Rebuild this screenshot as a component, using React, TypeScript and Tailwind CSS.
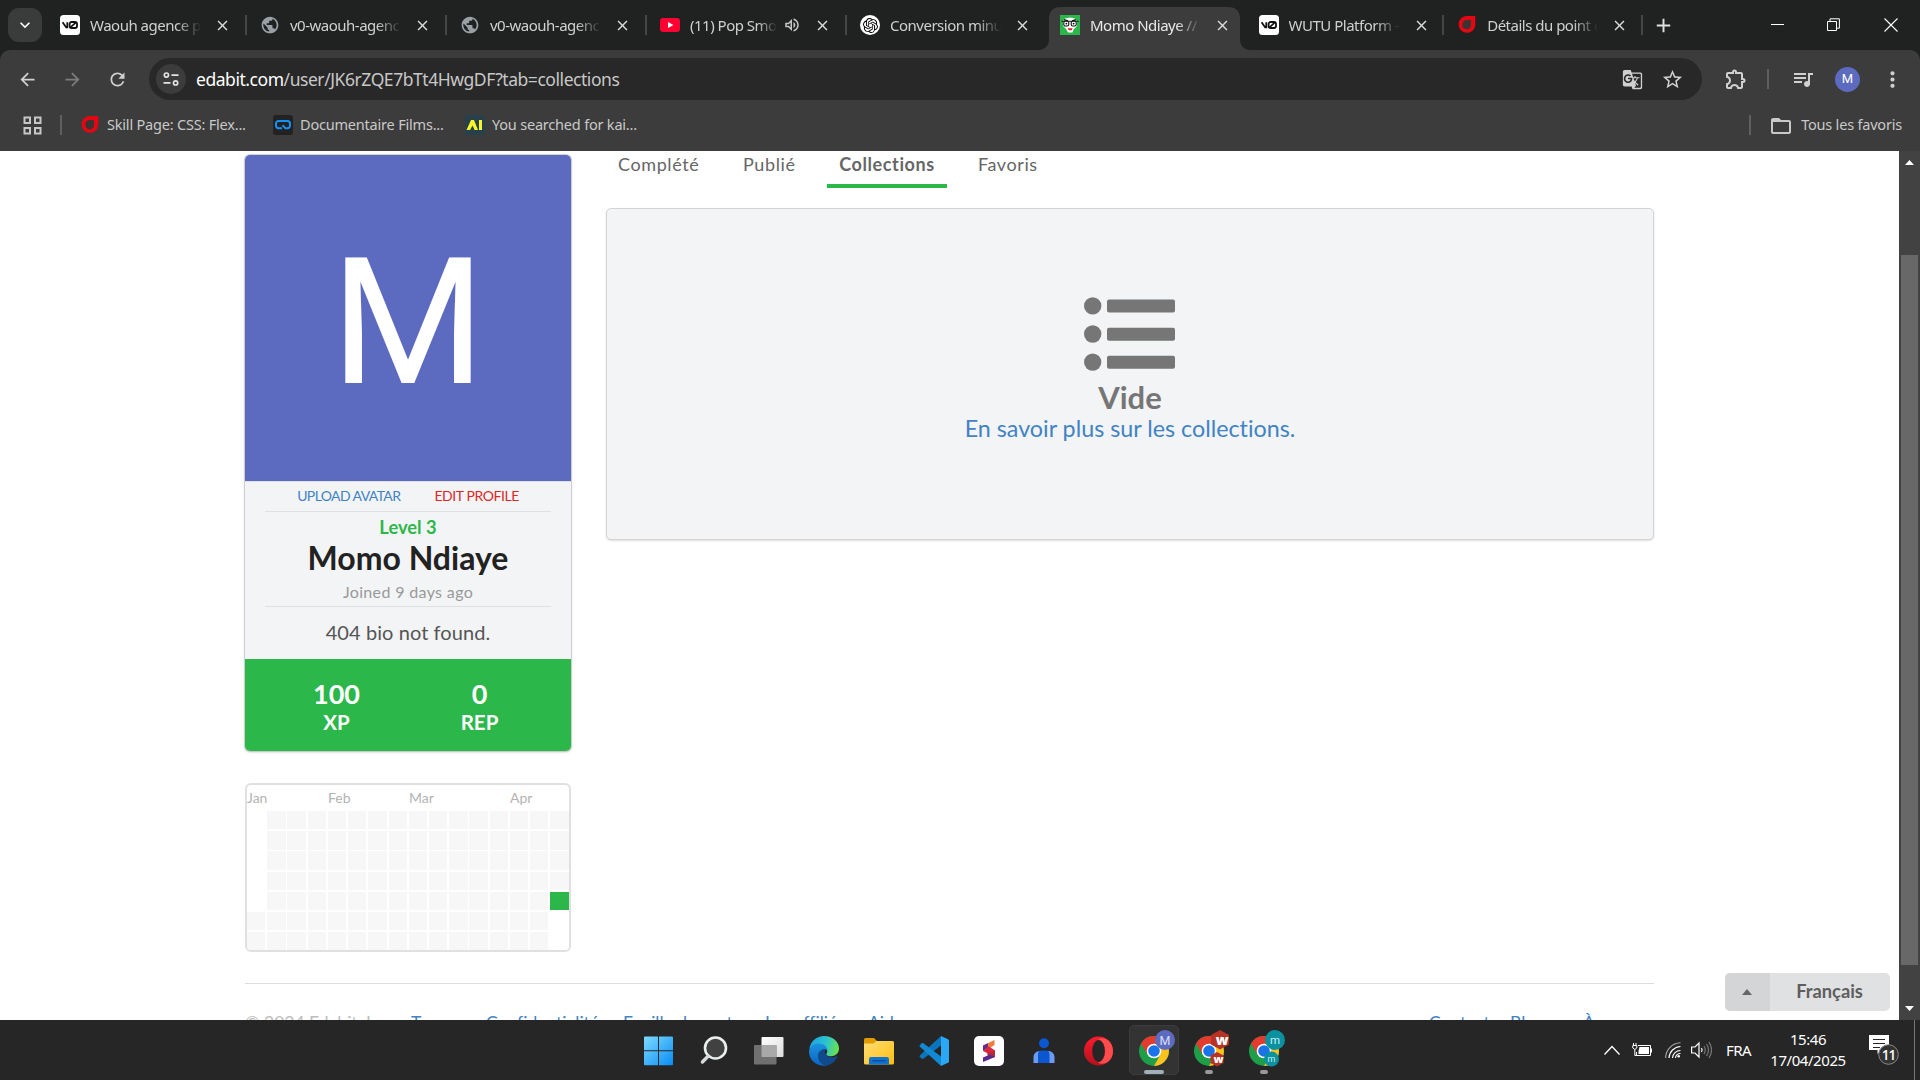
import React from "react";
import {
  MdAdd, MdArrowBack, MdArrowForward, MdClose, MdExpandMore, MdFolderOpen, MdGTranslate,
  MdMoreVert, MdOutlineExtension, MdOutlineVolumeUp, MdPublic, MdQueueMusic, MdRefresh, MdStarBorder,
} from "react-icons/md";
import { SiOpenai } from "react-icons/si";

function V0Icon() {
  return (
    <svg width="20" height="20" viewBox="0 0 20 20">
      <rect width="20" height="20" rx="3.5" fill="#fff" />
      <path d="M2.6 7.2l3.6 5.2h1.1V7.2" fill="none" stroke="#111" strokeWidth="1.8" />
      <rect x="9.6" y="7" width="7.4" height="6" rx="2" fill="none" stroke="#111" strokeWidth="1.8" />
      <path d="M10.4 12.4l5.6-5" stroke="#111" strokeWidth="1.6" />
    </svg>
  );
}

function RedDropIcon() {
  return (
    <svg width="20" height="20" viewBox="0 0 20 20">
      <path d="M10 1H18.3V10.5A8.4 8.4 0 1 1 10 1Z" fill="#e30613" />
      <path d="M10 5H14V10.5A4.3 4.6 0 1 1 10 5Z" fill="#3a3433" />
    </svg>
  );
}

function YoutubeIcon() {
  return (
    <svg width="20" height="20" viewBox="0 0 20 20">
      <rect y="3" width="20" height="14" rx="3.2" fill="#ff0033" />
      <path d="M8 7l5.400 3L8 13Z" fill="#fff" />
    </svg>
  );
}

function OpenAiIcon() {
  return (
    <span className="flex h-5 w-5 items-center justify-center rounded-full bg-white text-black">
      <SiOpenai size={15} />
    </span>
  );
}

function EdabitIcon() {
  return (
    <svg width="20" height="20" viewBox="0 0 20 20">
      <rect width="20" height="20" fill="#2cb74b" />
      <path d="M3 6L5 3.4 10 2.4 15 3.4 17 6V11L13.5 14.5 12.5 17.5H8L6.5 14.5 3 11Z" fill="#fff" />
      <path d="M1.5 6.3h17M4 4.6l4 1.2M16 4.6l-4 1.2" stroke="#111" strokeWidth="1.1" />
      <rect x="3.8" y="6.2" width="5" height="4.8" rx="1.6" fill="#fff" stroke="#111" strokeWidth="1.1" />
      <rect x="11.2" y="6.2" width="5" height="4.8" rx="1.6" fill="#fff" stroke="#111" strokeWidth="1.1" />
      <circle cx="6.4" cy="8.6" r=".9" fill="#111" />
      <circle cx="13.6" cy="8.6" r=".9" fill="#111" />
      <path d="M7.6 13.2h5l-1 2H8.8Z" fill="#d81f26" />
    </svg>
  );
}

type Tab = { icon: React.ReactNode; title: string; active?: boolean; sound?: boolean; rule: boolean };

const tabs: Tab[] = [
  { icon: <V0Icon />, title: "Waouh agence pub", rule: true },
  { icon: <MdPublic size={22} color="#9aa0a6" />, title: "v0-waouh-agence", rule: true },
  { icon: <MdPublic size={22} color="#9aa0a6" />, title: "v0-waouh-agence", rule: true },
  { icon: <YoutubeIcon />, title: "(11) Pop Smoke", sound: true, rule: true },
  { icon: <OpenAiIcon />, title: "Conversion minutes", rule: false },
  { icon: <EdabitIcon />, title: "Momo Ndiaye // Ed", active: true, rule: false },
  { icon: <V0Icon />, title: "WUTU Platform - S", rule: true },
  { icon: <RedDropIcon />, title: "Détails du point d", rule: true },
];

function TabItem({ tab, narrow }: { tab: Tab; narrow: boolean }) {
  return (
    <div className={"relative h-[50px] shrink-0 " + (narrow ? "w-[198.6px]" : "w-[200px]")}>
      {tab.active && (
        <svg className="absolute -left-[12px] top-[7px]" width="213" height="43" viewBox="0 0 213 43">
          <path d="M0 43C7 43 11 39 11 32V12C11 4 15 0 23 0H190C198 0 202 4 202 12V32C202 39 206 43 213 43Z" fill="#3c3c3c" />
        </svg>
      )}
      <div className="relative flex h-full items-center pl-[10px]">
        <span className="flex w-5 shrink-0 justify-center">{tab.icon}</span>
        <span
          className={
            "ml-[10px] overflow-hidden whitespace-nowrap text-[15px] leading-[50px] tracking-[-0.5px] [mask-image:linear-gradient(to_right,black_78%,transparent)] " +
            (tab.sound ? "w-[87px] " : "w-[111px] ") + (tab.active ? "text-[#e8e8e8]" : "text-[#cfd0cf]")
          }
        >
          {tab.title}
        </span>
        {tab.sound && <MdOutlineVolumeUp className="ml-[6px] shrink-0" size={18} color="#c7c7c7" />}
        <MdClose className={tab.sound ? "ml-[13px] shrink-0" : "ml-[13px] shrink-0"} size={17} color="#dcdcdc" />
      </div>
      {tab.rule && <div className="absolute right-[3px] top-[15px] h-5 w-[2px] bg-[#444746]" />}
    </div>
  );
}

function TabStrip() {
  return (
    <div className="flex h-[50px] items-center bg-[#202221] text-white">
      <div className="ml-2 flex h-[34px] w-[34px] items-center justify-center rounded-[11px] bg-[#3a3b3b]">
        <MdExpandMore size={20} />
      </div>
      <div className="ml-[8px] flex">
        {tabs.map((t, i) => (
          <TabItem key={i} tab={t} narrow={i > 4} />
        ))}
      </div>
      <MdAdd className="ml-[6px]" size={23} color="#e0e0e0" />
      <div className="ml-auto flex items-center">
        <svg width="14" height="14" viewBox="0 0 14 14"><path d="M0 6.5h13" stroke="#fff" /></svg>
        <svg className="ml-[42px]" width="14" height="14" viewBox="0 0 14 14" fill="none" stroke="#fff">
          <path d="M.5 3.5h9v9h-9zM3 3V.8h9.4v9.4H10" />
        </svg>
        <svg className="ml-[43px] mr-[22px]" width="14" height="14" viewBox="0 0 14 14"><path d="M.5.5l13 13M13.5.5l-13 13" stroke="#fff" strokeWidth="1.1" /></svg>
      </div>
    </div>
  );
}

function Toolbar() {
  return (
    <div className="bg-[#202221]">
      <div className="flex h-[58px] items-center rounded-t-[10px] bg-[#3c3c3c] text-[#d0d0d0]">
        <MdArrowBack className="ml-[17px]" size={21} />
        <MdArrowForward className="ml-[24px] text-[#7c7c7c]" size={21} />
        <MdRefresh className="ml-[24px]" size={21} />
        <div className="ml-[21px] flex h-[42px] w-[1553px] items-center rounded-full bg-[#282828] pl-[7px]">
          <div className="flex h-[30px] w-[30px] items-center justify-center rounded-full bg-[#3c3c3c]">
            <svg width="16" height="14" viewBox="0 0 16 14" fill="none" stroke="#e3e3e3" strokeWidth="1.7">
              <circle cx="3.4" cy="3.1" r="2.1" />
              <path d="M8.5 3.1h7M.5 10.9h7" />
              <circle cx="12.6" cy="10.9" r="2.1" />
            </svg>
          </div>
          <span className="ml-[10px] whitespace-nowrap text-[17.5px] tracking-[-0.45px] text-[#c7c7c7]">
            <span className="text-white">edabit.com</span>/user/JK6rZQE7bTt4HwgDF?tab=collections
          </span>
          <MdGTranslate className="ml-auto" size={21} />
          <MdStarBorder className="ml-[18px] mr-[18px]" size={23} />
        </div>
        <MdOutlineExtension className="ml-[22px]" size={24} />
        <div className="ml-[19px] h-5 w-[2px] bg-[#5f5f5f]" />
        <MdQueueMusic className="ml-[22px]" size={24} />
        <div className="ml-[20px] flex h-[25px] w-[25px] items-center justify-center rounded-full bg-[#5c6bc0] font-[Roboto] text-[13px] text-white">M</div>
        <MdMoreVert className="ml-[20px]" size={25} />
      </div>
    </div>
  );
}

function Bookmarks() {
  return (
    <div className="flex h-[43px] items-start bg-[#3c3c3c] pt-[7px] text-[14.5px] leading-[18px] tracking-[-0.2px] text-[#c9c9c9]">
      <svg className="ml-[23px] mt-px" width="19" height="19" viewBox="0 0 19 19" fill="none" stroke="#c7c7c7" strokeWidth="2">
        <path d="M1.5 1.5h5.5v5.5H1.5zM12 1.5h5.5v5.5H12zM1.5 12h5.5v5.5H1.5zM12 12h5.5v5.5H12z" />
      </svg>
      <div className="ml-[18px] h-5 w-[2px] bg-[#5f5f5f]" />
      <div className="ml-[18px] flex w-[193px]"><RedDropIcon /><span className="ml-[7px] whitespace-nowrap">Skill Page: CSS: Flex...</span></div>
      <div className="flex w-[192px]">
        <svg width="20" height="20" viewBox="0 0 20 20">
          <rect width="20" height="20" rx="3" fill="#222" />
          <path d="M9 13.200H5.500A2.500 2.500 0 0 1 3 10.700V8.500A2.500 2.500 0 0 1 5.500 6H14.500A2.500 2.500 0 0 1 17 8.500V10.700A2.500 2.500 0 0 1 14.500 13.200H12.500L9.500 10.300" fill="none" stroke="#1592f5" strokeWidth="2" />
        </svg>
        <span className="ml-[7px] whitespace-nowrap">Documentaire Films...</span>
      </div>
      <div className="flex">
        <svg width="20" height="20" viewBox="0 0 20 20">
          <rect width="20" height="20" fill="#26414b" />
          <path d="M1.500 15L6 5H9L13 15H9.600L7.500 10.600 5 15ZM14 5h3v10h-3z" fill="#f8f32b" />
        </svg>
        <span className="ml-[7px] whitespace-nowrap">You searched for kai...</span>
      </div>
      <div className="ml-auto h-5 w-[2px] bg-[#5f5f5f]" />
      <MdFolderOpen className="-mt-px ml-[18px]" size={24} />
      <span className="ml-[8px] mr-[18px] whitespace-nowrap">Tous les favoris</span>
    </div>
  );
}

function ProfileCard() {
  return (
    <div className="flex w-[326px] flex-col overflow-hidden rounded-[5px] bg-[#f3f4f6] text-center shadow-[0_1px_3px_0_#c4c4c5,0_0_0_1px_#d4d4d5]">
      <div className="flex h-[326px] items-center justify-center bg-[#5c6bc0] pt-[9px]">
        <span className="font-[Roboto] text-[177px] leading-none text-white">M</span>
      </div>
      <div className="flex h-[178px] flex-col border-t border-[#dfe0e2] px-5">
        <div className="flex h-[30px] justify-center gap-[34px] border-b border-[#dfe0e2] text-[14px] leading-[28px]">
          <span className="tracking-[-0.6px] text-[#4183c4]">UPLOAD AVATAR</span>
          <span className="tracking-[-0.42px] text-[#db2828]">EDIT PROFILE</span>
        </div>
        <div className="mt-[2px] h-[26px] text-[18.3px] font-bold leading-[26px] text-[#2cb74b]">Level 3</div>
        <div className="h-[36px] text-[32px] font-bold leading-[36px] text-[#222]">Momo Ndiaye</div>
        <div className="h-[31px] border-b border-[#dfe0e2] text-[16px] leading-[32px] tracking-[0.35px] text-[#999]">Joined 9 days ago</div>
        <div className="text-[20px] leading-[50px] tracking-[0.08px] text-[#555]">404 bio not found.</div>
      </div>
      <div className="grid h-[92px] grid-cols-2 bg-[#2cb74b] px-5 pt-[20px] font-bold text-white">
        <div>
          <div className="text-[27px] leading-[30px]">100</div>
          <div className="text-[20.5px] leading-[26px]">XP</div>
        </div>
        <div>
          <div className="text-[27px] leading-[30px]">0</div>
          <div className="text-[20.5px] leading-[26px]">REP</div>
        </div>
      </div>
    </div>
  );
}

function cellClass(row: number, col: number) {
  if (col === 15 && row === 4) return "bg-[#2cb74b]";
  if ((col === 0 && row < 5) || (col === 15 && row > 4)) return "bg-white";
  return "bg-[#f7f7f7]";
}

function Heatmap() {
  return (
    <div className="mt-[32px] h-[169px] w-[326px] overflow-hidden rounded-[6px] border-2 border-[#e0e0e0]">
      <div className="flex h-[26px] text-[14px] leading-[26px] text-[#b3b3b3]">
        <span className="w-[81px]">Jan</span>
        <span className="w-[81px]">Feb</span>
        <span className="w-[101px]">Mar</span>
        <span>Apr</span>
      </div>
      <div className="grid grid-cols-[repeat(16,18.4px)] gap-[1.83px]">
        {Array.from({ length: 112 }, (_, i) => (
          <div key={i} className={"h-[18.4px] " + cellClass(Math.floor(i / 16), i % 16)} />
        ))}
      </div>
    </div>
  );
}

function PageTabs() {
  return (
    <div className="flex h-[37px] text-[18px] leading-[26px] tracking-[0.6px] text-[#666]">
      <span className="ml-[12px] w-[125px]">Complété</span>
      <span className="w-[84px]">Publié</span>
      <span className="w-[120px] border-b-4 border-[#2cb74b] text-center font-bold">Collections</span>
      <span className="ml-[31px]">Favoris</span>
    </div>
  );
}

function CollectionsPanel() {
  return (
    <div className="mt-[20px] flex h-[332px] flex-col items-center rounded-[5px] border border-[#d4d4d5] bg-[#f3f4f6] pt-[88px] shadow-[0_1px_2px_0_rgba(34,36,38,0.15)]">
      <svg width="92" height="74" viewBox="0 0 92 74" fill="#767676">
        <circle cx="8.7" cy="8.900" r="8.700" /><rect x="23" y="2.600" width="68" height="13" rx="2" />
        <circle cx="8.7" cy="37" r="8.700" /><rect x="23" y="30.700" width="68" height="13" rx="2" />
        <circle cx="8.7" cy="65.100" r="8.700" /><rect x="23" y="58.800" width="68" height="13" rx="2" />
      </svg>
      <div className="mt-[11px] text-[31px] font-bold leading-[31px] text-[#767676]">Vide</div>
      <div className="text-[23.3px] leading-[30px] text-[#4183c4]">En savoir plus sur les collections.</div>
    </div>
  );
}

function Footer() {
  return (
    <div className="ml-[245px] w-[1409px] border-t border-[#dcddde]">
      <div className="mt-[26px] flex text-[17.5px] leading-[26px] text-[#4183c4]">
        <span className="w-[166px] whitespace-nowrap text-[#bdbdbd]">© 2024 Edabit, Inc</span>
        <span className="w-[75px]">Termes</span>
        <span className="w-[137px]">Confidentialité</span>
        <span className="w-[142px] whitespace-nowrap">Feuille de route</span>
        <span className="w-[103px] whitespace-nowrap">Les affiliés</span>
        <span>Aide</span>
        <span className="ml-auto w-[81px]">Contact</span>
        <span className="w-[73px]">Blog</span>
        <span className="w-[71px] whitespace-nowrap">À propos</span>
      </div>
    </div>
  );
}

function ScrollBar() {
  return (
    <div className="flex h-full w-[21px] flex-col items-center bg-[#424242]">
      <svg className="mt-[9px]" width="9" height="5" viewBox="0 0 9 5"><path d="M0 5L4.5 0 9 5Z" fill="#fff" /></svg>
      <div className="mt-[90px] h-[710px] w-[17px] bg-[#686868]" />
      <svg className="mb-[9px] mt-auto" width="9" height="5" viewBox="0 0 9 5"><path d="M0 0L4.5 5 9 0Z" fill="#fff" /></svg>
    </div>
  );
}

function Viewport() {
  return (
    <div className="flex h-[869px] overflow-hidden bg-white font-[Lato] [font-variant-ligatures:none]">
      <div className="relative h-[869px] w-[1899px] overflow-hidden">
        <div className="flex h-[832px] pl-[245px]">
          <div className="w-[326px] pt-[4px]">
            <ProfileCard />
            <Heatmap />
          </div>
          <div className="ml-[35px] w-[1048px]">
            <PageTabs />
            <CollectionsPanel />
          </div>
        </div>
        <Footer />
        <div className="absolute bottom-[9px] right-[9px] flex h-[38px] w-[165px] items-center overflow-hidden rounded-[5px] bg-[#e0e1e2]">
          <div className="flex h-full w-[45px] items-center justify-center bg-[#d4d5d6] pr-px">
            <svg width="10" height="6" viewBox="0 0 10 6"><path d="M0 6L5 0 10 6Z" fill="#666" /></svg>
          </div>
          <span className="flex-1 pb-px pr-px text-center text-[18.3px] font-bold text-[#5e5e5e]">Français</span>
        </div>
      </div>
      <ScrollBar />
    </div>
  );
}

function ChromeIcon({ children }: { children?: React.ReactNode }) {
  return (
    <svg width="44" height="44" viewBox="-22 -22 44 44" className="overflow-visible">
      <circle r="15" fill="#1e9e49" />
      <path d="M0 -7.3H13.1A15 15 0 0 1 0 15L6.3 3.65Z" fill="#fcc31d" />
      <path d="M-13 -7.5L-6.3 3.65 0 -7.3H13A15 15 0 0 0 -13 -7.5Z" fill="#e33b2e" />
      <circle r="7.3" fill="#fff" />
      <circle r="5.8" fill="#1a73e8" />
      {children}
    </svg>
  );
}

function Slot({ children, mark, active }: { children: React.ReactNode; mark?: boolean; active?: boolean }) {
  return (
    <div className="flex w-[55px] justify-center">
      <div className={"flex h-[50px] w-[50px] flex-col items-center justify-between " + (active ? "rounded-[5px] border border-[#3d3d3d] bg-[#333]" : "border border-transparent")}>
        <div className="flex h-[50px] w-full shrink-0 items-center justify-center">{children}</div>
        {mark && <div className={"-mt-[6px] h-1 shrink-0 rounded-full " + (active ? "w-5 bg-[#9fb0ba]" : "w-2 bg-[#999]")} />}
      </div>
    </div>
  );
}

function Taskbar() {
  return (
    <div className="flex h-[60px] items-center bg-[#262626] text-white">
      <div className="ml-[631px] flex">
        <Slot>
          <svg width="30" height="30" viewBox="0.5 0 30 30">
            <defs>
              <linearGradient id="win" gradientUnits="userSpaceOnUse" x1="0" y1="0" x2="29" y2="29"><stop stopColor="#7fdcff" /><stop offset="1" stopColor="#0a8df5" /></linearGradient>
            </defs>
            <path d="M1.5.5h12.600a.4.4 0 0 1 .4.4v13.300H.5V1.500a1 1 0 0 1 1-1zM15.500.5h13a1 1 0 0 1 1 1v12.700h-14zM.5 15.300h14v14H1.500a1 1 0 0 1-1-1zM15.500 15.300h14v13a1 1 0 0 1-1 1h-13z" fill="url(#win)" />
          </svg>
        </Slot>
        <Slot>
          <svg width="30" height="30" viewBox="0 0 30 30" fill="none">
            <circle cx="16.500" cy="12" r="10.500" fill="#414141" stroke="#eceff0" strokeWidth="2.600" />
            <path d="M9.300 20L3.400 26" stroke="#d6dadc" strokeWidth="3.400" strokeLinecap="round" />
          </svg>
        </Slot>
        <Slot>
          <svg width="30" height="30" viewBox="0 0 30 30">
            <defs><linearGradient id="tv" x1="0" y1="0" x2="1" y2="1"><stop stopColor="#fff" /><stop offset="1" stopColor="#dcdcdc" /></linearGradient></defs>
            <rect x="7.500" y="1" width="22" height="20" rx="1" fill="url(#tv)" />
            <rect x="0" y="9" width="22.500" height="19.500" rx="1" fill="#707070" />
            <path d="M7.500 9h15v12h-15z" fill="#a9a9a9" />
          </svg>
        </Slot>
        <Slot>
          <svg width="30" height="30" viewBox="0 0 30 30">
            <defs>
              <linearGradient id="e1" x1="0" y1=".3" x2="1" y2=".5"><stop stopColor="#1aa2e4" /><stop offset=".55" stopColor="#2cc4cf" /><stop offset="1" stopColor="#6be24b" /></linearGradient>
              <linearGradient id="e2" x1="0" y1="0" x2="0" y2="1"><stop stopColor="#1a93dd" /><stop offset="1" stopColor="#0b64c4" /></linearGradient>
            </defs>
            <path d="M.3 13C1.5 5 8 0 15 0c9 0 15 6 15 12.500 0 5-4 7.700-8 7.700-3.500 0-5.300-1.200-4.500-2.500 2-3 .2-8-5.500-8C6 9.700 1 12 .3 13Z" fill="url(#e1)" />
            <path d="M0 15.500C.5 10 5.500 7.500 10 7.500c5 0 8.500 3.500 8.500 7-3-2.500-9-.5-9 5.500 0 5 4.500 9 9 9.500C9 31.500 0 25 0 15.500Z" fill="url(#e2)" />
            <path d="M9 20c0-4.500 4-7.500 8-7-1.500 2-1.500 5 1 6.800 3 2 7 1.700 9.800.2.6 0 .8.400.5.900C25 27 20 29.500 17.500 29.500 12.500 29 9 25 9 20Z" fill="#114a8b" />
          </svg>
        </Slot>
        <Slot>
          <svg width="30" height="30" viewBox="0 0 30 30">
            <defs><linearGradient id="fo" x1="0" y1="0" x2="1" y2="1"><stop stopColor="#ffdf75" /><stop offset="1" stopColor="#ffbd10" /></linearGradient></defs>
            <path d="M0 3.500Q0 2 1.500 2H10l3 3v6H0Z" fill="#e09b00" />
            <path d="M0 7.500H9.500L12.500 5H28.500Q30 5 30 6.500V27Q30 28.500 28.500 28.500H1.500Q0 28.500 0 27Z" fill="url(#fo)" />
            <path d="M5 28.500V23Q5 21 7 21H23Q25 21 25 23V28.500Z" fill="#1173cf" />
            <path d="M8.500 24.800h13" stroke="#0b4b96" strokeWidth="1.300" />
          </svg>
        </Slot>
        <Slot>
          <svg width="30" height="30" viewBox="0 0 30 30">
            <path d="M22 0L1 19.200a1.300 1.300 0 0 0 0 1.900l1.800 1.600c.5.400 1.100.4 1.600.1L22 9.500Z" fill="#0a74bd" />
            <path d="M22 30L1 10.800a1.300 1.300 0 0 1 0-1.900l1.800-1.600c.5-.4 1.100-.4 1.600-.1L22 20.500Z" fill="#1489d3" />
            <path d="M22 0l7 3.200q1 .5 1 1.500V25.300q0 1-1 1.500L22 30Z" fill="#2aa8f5" />
          </svg>
        </Slot>
        <Slot>
          <svg width="30" height="30" viewBox="0 0 30 30">
            <rect width="30" height="30" rx="5" fill="#fff" />
            <path d="M9 9.500L20.500 4V9L15 12.500 9 15Z" fill="#f47b3c" />
            <path d="M9 9.500L14 7.300v4L9 15Z" fill="#6a2c91" />
            <path d="M9 15L15 10.500 21 14.500V21L9 15Z" fill="#d8263c" />
            <path d="M13 17.500L21 14.500V21L15 22Z" fill="#b52a3a" />
            <path d="M9 21.500L16 18.500 21 21 9 26Z" fill="#5b2a8c" />
          </svg>
        </Slot>
        <Slot>
          <svg width="30" height="30" viewBox="0 0 30 30">
            <circle cx="15" cy="7.300" r="5" fill="#0b57d0" />
            <path d="M4.500 27v-6a6 6 0 0 1 6-6h9a6 6 0 0 1 6 6v6Z" fill="#6c9bf5" />
            <path d="M9 27V18q0-3.500 3.500-3.500h4Q20.500 14.500 20.500 18V27Z" fill="#0b57d0" />
          </svg>
        </Slot>
        <Slot>
          <svg width="30" height="30" viewBox="0 0 30 30">
            <defs><linearGradient id="op" x1="0" y1="0" x2="0" y2="1"><stop stopColor="#ff1b2d" /><stop offset="1" stopColor="#b3101d" /></linearGradient></defs>
            <ellipse cx="14.500" cy="15" rx="14.500" ry="14.500" fill="url(#op)" />
            <path d="M14 3.500C19 0 29 4 29 15S19 30 14 26.500C18 26 21 21 21 15S18 4 14 3.500Z" fill="#ff4b4b" />
            <ellipse cx="14.500" cy="15" rx="6.300" ry="11" fill="#262626" />
          </svg>
        </Slot>
        <Slot mark active>
          <ChromeIcon>
            <circle cx="11" cy="-11" r="10" fill="#5c6bc0" />
            <text x="11" y="-6.500" textAnchor="middle" fontFamily="Roboto" fontSize="12.500" fill="#d9def5">M</text>
          </ChromeIcon>
        </Slot>
        <Slot mark>
          <ChromeIcon>
            <path d="M11 -21L20 -16V-6.500L11 -1.500 2 -6.500V-16Z" fill="#b83325" />
            <text x="13" y="-6.500" textAnchor="middle" fontFamily="Open Sans" fontWeight="800" fontSize="14" fill="#fff">w</text>
            <path d="M8 1L14.500 4.500V12L8 15.500 1.500 12V4.500Z" fill="#b83325" />
            <text x="9.500" y="11.500" textAnchor="middle" fontFamily="Open Sans" fontWeight="800" fontSize="11" fill="#fff">w</text>
          </ChromeIcon>
        </Slot>
        <Slot mark>
          <ChromeIcon>
            <circle cx="11" cy="-11" r="10" fill="#0b919f" />
            <text x="11" y="-7.300" textAnchor="middle" fontFamily="Roboto" fontSize="11.500" fill="#c9eef1">m</text>
            <circle cx="7.500" cy="8" r="7.500" fill="#0b919f" />
            <text x="7.500" y="11" textAnchor="middle" fontFamily="Roboto" fontSize="9" fill="#c9eef1">m</text>
          </ChromeIcon>
        </Slot>
      </div>
      <div className="ml-auto flex items-center">
        <svg width="16" height="10" viewBox="0 0 16 10"><path d="M.5 9.500L8 1.500l7.500 8" fill="none" stroke="#fff" strokeWidth="1.300" /></svg>
        <svg className="ml-[12px]" width="20" height="14" viewBox="0 0 20 14" fill="none" stroke="#fff">
          <path d="M6 2.500H18.500V12.500H4.500V9M19.500 5.500v4" />
          <path d="M7.500 4h9.500v7H6.500V8Z" fill="#fff" stroke="none" />
          <path d="M.8 2.500h4v2.500l-2 1.500-2-1.500zM1.500 0v2.500M4 0v2.500M2.800 6.500v6h2" />
        </svg>
        <svg className="ml-[13px]" width="16" height="16" viewBox="0 0 16 16" fill="none" stroke="#fff" strokeWidth="1.100">
          <path d="M.6 16A15.400 15.400 0 0 1 15.500.8" stroke="#aaa" /><path d="M4 16A12 12 0 0 1 15.500 4.500M7.500 16A8 8 0 0 1 15.500 8.500M10.500 16a5 5 0 0 1 5-4.500" />
          <circle cx="13.700" cy="14.300" r="1.300" fill="#fff" stroke="none" />
        </svg>
        <svg className="ml-[10px]" width="21" height="18" viewBox="0 0 21 18" fill="none" stroke="#fff" strokeWidth="1.200">
          <path d="M.6 6h3.400l4-4v14l-4-4H.6zM10.500 7q1.200 2 0 4" /><path d="M13 5q2.500 4 0 8M15.500 3q4 6 0 12M18 1q5 8 0 16" stroke="#777" />
        </svg>
        <span className="ml-[14px] w-[26px] text-[15px] tracking-[-0.5px]">FRA</span>
        <div className="ml-[18px] w-[76px] whitespace-nowrap text-center text-[15px] leading-[21px] tracking-[-0.45px]">
          <div>15:46</div>
          <div>17/04/2025</div>
        </div>
        <div className="relative ml-[23px] h-[30px] w-[30px]">
          <svg width="30" height="30" viewBox="0 0 30 30">
            <path d="M0 0H20V15H12L8.500 19V15H0Z" fill="#fff" />
            <path d="M4 4.500h12M4 8.500h12M4 12.500h7" stroke="#262626" strokeWidth="1.200" />
            <circle cx="19.500" cy="19.500" r="9.800" fill="#333" stroke="#8b8b8b" />
            <text x="19.500" y="24.500" textAnchor="middle" fontFamily="Open Sans" fontSize="13.500" fontWeight="600" letterSpacing="-1" fill="#fff">11</text>
          </svg>
        </div>
        <div className="ml-[15px] mr-[5px] h-[60px] w-px bg-[#777]" />
      </div>
    </div>
  );
}

export default function App() {
  return (
    <div className="h-[1080px] w-[1920px] overflow-hidden bg-white font-['Noto_Sans',sans-serif]">
      <TabStrip />
      <Toolbar />
      <Bookmarks />
      <Viewport />
      <Taskbar />
    </div>
  );
}
